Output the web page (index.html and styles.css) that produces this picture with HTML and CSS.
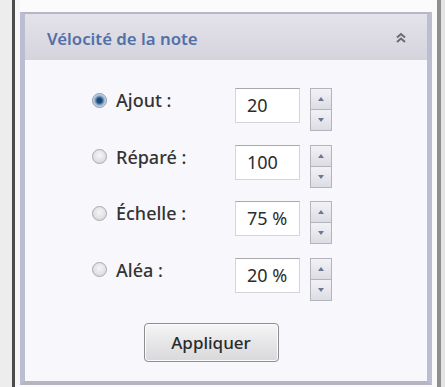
FILE: index.html
```html
<!DOCTYPE html>
<html lang="fr">
<head>
<meta charset="utf-8">
<title>Vélocité de la note</title>
<link rel="stylesheet" href="styles.css">
</head>
<body>
<div class="frame">
  <div class="edge-left"></div>
  <div class="rule-left"></div>
  <div class="gap-left"></div>
  <div class="col">
    <div class="panel">
      <div class="header">
        <span class="title">Vélocité de la note</span>
        <svg class="collapse" width="12" height="12" viewBox="0 0 12 12"><path d="M2 5.5 L6 2 L10 5.5 M2 10 L6 6.5 L10 10" fill="none" stroke="#6a6a70" stroke-width="2"/></svg>
      </div>
      <div class="body">
        <div class="form">
          <div class="row">
            <label class="opt"><span class="radio checked"></span><span class="lbl">Ajout :</span></label>
            <div class="field">20</div>
            <div class="spin"><span class="up"></span><span class="down"></span></div>
          </div>
          <div class="row">
            <label class="opt"><span class="radio"></span><span class="lbl">Réparé :</span></label>
            <div class="field">100</div>
            <div class="spin"><span class="up"></span><span class="down"></span></div>
          </div>
          <div class="row">
            <label class="opt"><span class="radio"></span><span class="lbl">Échelle :</span></label>
            <div class="field">75 %</div>
            <div class="spin"><span class="up"></span><span class="down"></span></div>
          </div>
          <div class="row">
            <label class="opt"><span class="radio"></span><span class="lbl">Aléa :</span></label>
            <div class="field">20 %</div>
            <div class="spin"><span class="up"></span><span class="down"></span></div>
          </div>
          <div class="actions"><button class="apply">Appliquer</button></div>
        </div>
      </div>
    </div>
  </div>
  <div class="gap-right"></div>
  <div class="rule-right"></div>
  <div class="edge-right"></div>
</div>
</body>
</html>
```
FILE: styles.css
```css
html, body {
  margin: 0;
  padding: 0;
  background: #fbfbfb;
  font-family: "Noto Sans", "Open Sans", sans-serif;
}
.frame {
  display: flex;
  height: 387px;
  width: 445px;
  overflow: hidden;
}
.edge-left { width: 12px; background: #ededed; }
.rule-left { width: 3px; background: #4c4c4c; }
.gap-left { width: 5px; background: #f7f7f7; }
.gap-right { width: 5px; background: #fafafa; }
.rule-right { width: 4px; background: #8e8e8e; }
.edge-right { width: 4px; background: #e4e4e4; }
.col {
  width: 412px;
  padding-top: 12px;
  box-sizing: border-box;
  display: flex;
  flex-direction: column;
}
.panel {
  height: 373px;
  box-sizing: border-box;
  border: 5px solid #bdbdd2;
  border-top: 2px solid #b6b6c6;
  border-bottom: 4px solid #b4b4c4;
  display: flex;
  flex-direction: column;
  background: #f8f7fb;
}
.header {
  height: 46px;
  flex: none;
  display: flex;
  align-items: center;
  justify-content: space-between;
  padding: 0 20px 0 22px;
  background: linear-gradient(to bottom, #e4e3ea, #d5d4dc);
}
.title {
  color: #5270a8;
  font-size: 16.8px;
  font-weight: 600;
  margin-top: 2px;
}
.collapse { display: block; margin-top: 2px; }
.body {
  flex: 1;
  padding-top: 28px;
}
.form {
  margin-left: 67px;
  width: 241px;
  display: flex;
  flex-direction: column;
}
.row {
  height: 56.5px;
  display: flex;
  align-items: flex-start;
}
.opt {
  width: 143px;
  display: flex;
  align-items: center;
  height: 24px;
}
.radio {
  width: 15px;
  height: 15px;
  border-radius: 50%;
  border: 1px solid #a9a9ae;
  background: radial-gradient(circle at 50% 40%, #f6f6f6, #d2d2d6);
  box-sizing: border-box;
  flex: none;
}
.radio.checked {
  border-color: #8496ac;
  background: radial-gradient(circle, #204a72 0 2.5px, #4f80ac 3.5px, #9ab6d0 5px, #d6e0ea 6.5px);
}
.lbl {
  margin-left: 9px;
  font-size: 18px;
  color: #333333;
  font-weight: 500;
}
.field {
  width: 65px;
  height: 35px;
  box-sizing: border-box;
  border: 1px solid #d4d4da;
  border-top-color: #a8a8ae;
  background: #ffffff;
  font-size: 18px;
  color: #2c2c2c;
  padding-left: 11px;
  line-height: 33px;
}
.spin {
  margin-left: 10px;
  width: 22px;
  height: 43px;
  display: flex;
  flex-direction: column;
  border: 1px solid #b4b4bc;
  box-sizing: border-box;
}
.spin span {
  flex: 1;
  position: relative;
  background: linear-gradient(to bottom, #f2f2f6, #dcdce4);
}
.spin .up { border-bottom: 1px solid #b4b4bc; }
.spin span::after {
  content: "";
  position: absolute;
  left: 50%;
  top: 50%;
  width: 0;
  height: 0;
  border-left: 3.5px solid transparent;
  border-right: 3.5px solid transparent;
  transform: translate(-50%, -50%);
}
.spin .up::after { border-bottom: 4px solid #6b7893; }
.spin .down::after { border-top: 4px solid #6b7893; }
.actions {
  display: flex;
  justify-content: center;
  padding-top: 9px;
  padding-right: 3px;
}
.apply {
  width: 135px;
  height: 39px;
  border: 1px solid #8e8e92;
  border-radius: 4px;
  background: linear-gradient(to bottom, #f6f6f6, #e6e6e8 50%, #d9d9dc);
  box-shadow: inset 0 0 0 1px #fbfbfb;
  font-family: "Noto Sans", "Open Sans", sans-serif;
  font-size: 17px;
  font-weight: 500;
  color: #2b2b2b;
  padding: 0;
}
```
